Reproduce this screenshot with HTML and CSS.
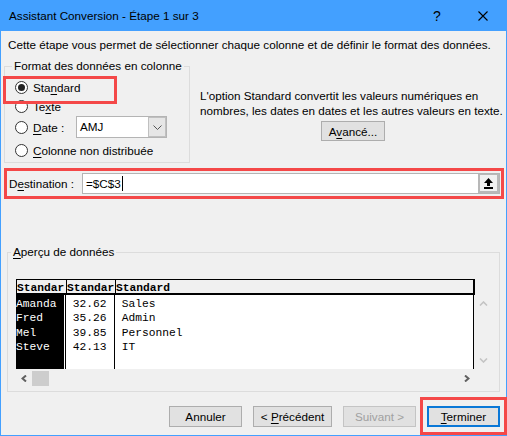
FILE: index.html
```html
<!DOCTYPE html>
<html lang="fr">
<head>
    <meta charset="UTF-8">
    <meta name="viewport" content="width=device-width, initial-scale=1.0">
    <title>Assistant Conversion</title>
    <link rel="stylesheet" href="styles.css">
</head>
<body>
    <div class="window">
        <div class="titlebar">
            <span class="title">Assistant Conversion - Étape 1 sur 3</span>
            <span class="help">?</span>
            <span class="close">
                <svg width="10" height="10" viewBox="0 0 10 10"><path d="M0.5 0.5 L9.5 9.5 M9.5 0.5 L0.5 9.5" stroke="#000" stroke-width="1.1" fill="none"/></svg>
            </span>
        </div>
        <div class="dialog">
            <p class="intro">Cette étape vous permet de sélectionner chaque colonne et de définir le format des données.</p>

            <div class="top-row">
                <fieldset class="group format">
                    <legend>Format des données en colonne</legend>
                    <div class="option option-standard">
                        <span class="radio checked"></span>
                        <span>Sta<u>n</u>dard</span>
                    </div>
                    <div class="option option-text">
                        <span class="radio"></span>
                        <span>Te<u>x</u>te</span>
                    </div>
                    <div class="option option-date">
                        <span class="radio"></span>
                        <span class="date-label"><u>D</u>ate :</span>
                        <div class="combo">
                            <span class="combo-value">AMJ</span>
                            <span class="combo-btn">
                                <svg width="9" height="5" viewBox="0 0 9 5"><path d="M0.5 0.5 L4.5 4.5 L8.5 0.5" stroke="#555" stroke-width="1" fill="none"/></svg>
                            </span>
                        </div>
                    </div>
                    <div class="option option-skip">
                        <span class="radio"></span>
                        <span><u>C</u>olonne non distribuée</span>
                    </div>
                </fieldset>
                <div class="info">
                    <p>L'option Standard convertit les valeurs numériques en<br>nombres, les dates en dates et les autres valeurs en texte.</p>
                    <button class="btn btn-advanced">A<u>v</u>ancé...</button>
                </div>
            </div>

            <div class="destination">
                <span class="dest-label">D<u>e</u>stination :</span>
                <div class="dest-field">
                    <span class="dest-value">=$C$3<span class="caret"></span></span>
                    <span class="dest-btn">
                        <svg width="9" height="11" viewBox="0 0 9 11"><path d="M4.5 0 L9 5 H6 V8 H3 V5 H0 Z" fill="#000"/><rect x="0" y="9" width="9" height="2" fill="#000"/></svg>
                    </span>
                </div>
            </div>

            <fieldset class="group preview">
                <legend><u>A</u>perçu de données</legend>
                <div class="preview-box">
                    <div class="preview-head">
                        <span class="cell cell-a">Standar</span>
                        <span class="cell cell-b">Standar</span>
                        <span class="cell cell-c">Standard</span>
                    </div>
                    <div class="preview-data">
                        <div class="cell cell-a">Amanda
Fred
Mel
Steve</div>
                        <div class="cell cell-b"> 32.62
 35.26
 39.85
 42.13</div>
                        <div class="cell cell-c"> Sales
 Admin
 Personnel
 IT</div>
                    </div>
                    <div class="vscroll">
                        <svg width="9" height="5" viewBox="0 0 9 5"><path d="M1 4.5 L4.5 1 L8 4.5" stroke="#c4c4c4" stroke-width="1.6" fill="none"/></svg>
                        <svg width="9" height="5" viewBox="0 0 9 5"><path d="M1 0.5 L4.5 4 L8 0.5" stroke="#c4c4c4" stroke-width="1.6" fill="none"/></svg>
                    </div>
                    <div class="hscroll">
                        <span class="arrow-btn">
                            <svg width="6" height="7" viewBox="0 0 6 7"><path d="M5 0.5 L1.5 3.5 L5 6.5" stroke="#606060" stroke-width="2" fill="none"/></svg>
                        </span>
                        <span class="thumb"></span>
                        <span class="track"></span>
                        <span class="arrow-btn">
                            <svg width="6" height="7" viewBox="0 0 6 7"><path d="M1 0.5 L4.5 3.5 L1 6.5" stroke="#606060" stroke-width="2" fill="none"/></svg>
                        </span>
                    </div>
                </div>
            </fieldset>

            <div class="actions">
                <button class="btn">Annuler</button>
                <button class="btn btn-prev">&lt; <u>P</u>récédent</button>
                <button class="btn btn-disabled">Suivant &gt;</button>
                <button class="btn btn-finish"><u>T</u>erminer</button>
            </div>
        </div>
    </div>
</body>
</html>
```

FILE: styles.css
```css
* {
    box-sizing: border-box;
}
body {
    margin: 0;
    font-family: "Liberation Sans", Arial, sans-serif;
    font-size: 11.7px;
    color: #000;
    background-color: #f0f0f0;
}
u {
    text-decoration-thickness: 1px;
    text-underline-offset: 2px;
}
.window {
    width: 507px;
    height: 436px;
    display: flex;
    flex-direction: column;
}

/* barre de titre */
.titlebar {
    height: 31px;
    background-color: #43a0ff;
    display: flex;
    align-items: center;
    padding-left: 9px;
}
.title {
    flex: 1;
}
.help {
    width: 10px;
    text-align: center;
    font-size: 14px;
    margin-right: 36px;
}
.close {
    display: flex;
    margin-right: 19px;
}

.dialog {
    flex: 1;
    background-color: #f0f0f0;
    border: 1px solid #43a0ff;
    border-top: none;
    padding-top: 6px;
}
.intro {
    margin: 0 0 5px 7px;
    line-height: 16px;
}

/* groupes */
.group {
    border: 1px solid #dcdcdc;
    min-width: 0;
    margin: 0;
}
.group legend {
    line-height: 16px;
    padding: 0 2px;
    white-space: nowrap;
}
.top-row {
    display: flex;
    align-items: flex-start;
}
.format {
    width: 186px;
    height: 105px;
    margin-left: 3px;
    padding: 3px 0 2px 10px;
}
.format legend {
    margin-left: -3px;
}
.option {
    display: flex;
    align-items: center;
    height: 20px;
    white-space: nowrap;
}
.option-text {
    height: 19px;
}
.option-date {
    height: 22px;
}
.option-skip {
    margin-top: 2px;
}
.option-standard {
    position: relative;
}
.option-standard::after {
    content: "";
    position: absolute;
    left: -12px;
    top: -1px;
    width: 108px;
    height: 22px;
    border: 3px solid #f44848;
}
.radio {
    flex: none;
    width: 13px;
    height: 13px;
    border: 1px solid #333;
    border-radius: 50%;
    background-color: #fff;
    margin-right: 5px;
    display: flex;
    align-items: center;
    justify-content: center;
}
.radio.checked::after {
    content: "";
    width: 7px;
    height: 7px;
    border-radius: 50%;
    background-color: #222;
}
.date-label {
    width: 43px;
}
.combo {
    width: 91px;
    height: 22px;
    display: flex;
    border: 1px solid #b4b4b4;
    background-color: #fff;
}
.combo-value {
    flex: 1;
    padding-left: 3px;
    line-height: 20px;
}
.combo-btn {
    width: 18px;
    background-color: #e6e6e6;
    border: 1px solid #c0c0c0;
    display: flex;
    align-items: center;
    justify-content: center;
}

.info {
    margin: 30px 0 0 10px;
}
.info p {
    margin: 0;
    line-height: 15px;
    white-space: nowrap;
}

/* boutons */
.btn {
    height: 21px;
    width: 73px;
    padding: 0;
    font-family: inherit;
    font-size: 11.7px;
    color: #000;
    background-color: #e1e1e1;
    border: 1px solid #adadad;
}
.btn-advanced {
    width: 64px;
    height: 20px;
    margin: 3px 0 0 121px;
}

/* destination */
.destination {
    margin: 5px 0 0 3px;
    width: 500px;
    height: 31px;
    border: 3px solid #f44848;
    display: flex;
    align-items: center;
    padding: 0 1px;
}
.dest-label {
    width: 74px;
    padding-left: 1px;
}
.dest-field {
    flex: 1;
    height: 21px;
    display: flex;
    border: 1px solid #b4b4b4;
    background-color: #fff;
}
.dest-value {
    flex: 1;
    padding-left: 3px;
    line-height: 19px;
    display: flex;
    align-items: center;
}
.caret {
    width: 1px;
    height: 15px;
    margin-left: 1px;
    background-color: #000;
}
.dest-btn {
    width: 21px;
    border: 2px solid #b8b8b8;
    border-top-width: 1px;
    background-color: #f0f0f0;
    display: flex;
    align-items: center;
    justify-content: center;
}

/* aperçu */
.preview {
    margin: 45px 0 0 6px;
    width: 493px;
    padding: 19px 0 5px 8px;
}
.preview legend {
    margin-left: -5px;
}
.preview-box {
    display: grid;
    grid-template-columns: 459px 16px;
    grid-template-rows: 16px 74px 17px;
    font-family: "Liberation Mono", "Courier New", monospace;
    font-size: 11.25px;
}
.preview-head {
    grid-column: 1;
    display: flex;
    background-color: #f0f0f0;
    border: 1px solid #000;
    border-right-width: 2px;
    border-bottom-width: 2px;
    font-weight: bold;
}
.preview-head .cell {
    line-height: 12px;
    padding-top: 2px;
}
.cell {
    white-space: pre;
}
.cell-a {
    width: 48px;
}
.cell-b {
    width: 49px;
    margin-left: 1px;
    border-left: 1px solid #000;
}
.cell-c {
    flex: 1;
    border-left: 1px solid #000;
}
.preview-head .cell-a {
    width: 49px;
}
.preview-head .cell-b {
    margin-left: 0;
}
.preview-data {
    grid-column: 1;
    width: 458px;
    display: flex;
    background-color: #fff;
    border-right: 1px solid #000;
}
.preview-data .cell {
    line-height: 14.3px;
    padding-top: 2px;
}
.preview-data .cell-a {
    background-color: #000;
    color: #fff;
}
.vscroll {
    grid-column: 2;
    grid-row: 2;
    display: flex;
    flex-direction: column;
    align-items: center;
    justify-content: space-between;
    padding: 6px 0 6px;
}
.hscroll {
    grid-column: 1;
    display: flex;
}
.arrow-btn {
    width: 16px;
    display: flex;
    align-items: center;
    justify-content: center;
    padding-top: 2px;
}
.thumb {
    width: 17px;
    margin-top: 2px;
    background-color: #cdcdcd;
}
.track {
    flex: 1;
}

.actions {
    margin-top: 14px;
    padding-right: 6px;
    display: flex;
    justify-content: flex-end;
    gap: 11px;
}
.btn-prev {
    width: 79px;
}
.btn-disabled {
    color: #a0a0a0;
    border-color: #c4c4c4;
}
.btn-finish {
    position: relative;
    border: 2px solid #0a78d7;
}
.btn-finish::after {
    content: "";
    position: absolute;
    top: -11px;
    left: -9px;
    right: -9px;
    bottom: -10px;
    border: 3px solid #f44848;
}
```
